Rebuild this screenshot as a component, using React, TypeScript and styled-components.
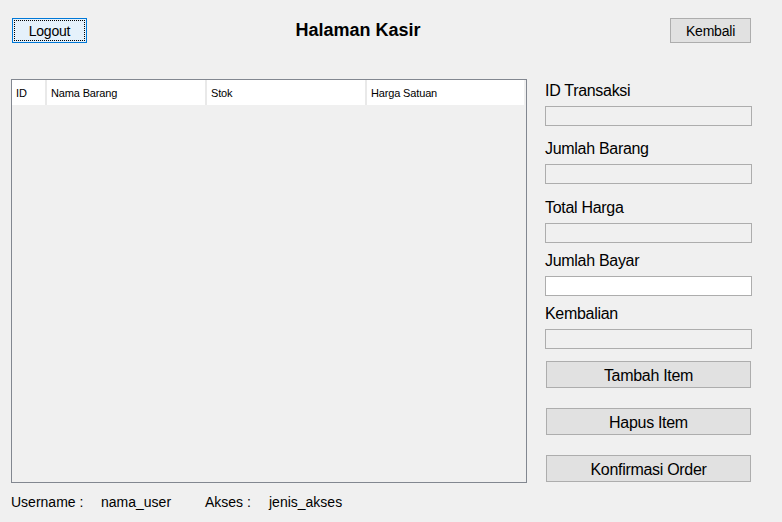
import React from "react";
import styled, { createGlobalStyle } from "styled-components";

const Global = createGlobalStyle`
  html, body { margin: 0; padding: 0; background: #f0f0f0; }
  body { font-family: "Liberation Sans", Arial, sans-serif; color: #000; }
  * { box-sizing: border-box; }
`;

const Frame = styled.div`
  width: 782px;
  height: 522px;
  background: #f0f0f0;
  padding-top: 18px;
`;

const TopBar = styled.div`
  display: flex;
  align-items: center;
  height: 25px;
  padding-left: 12px;
`;

const Title = styled.h1`
  margin: 0;
  width: 542px;
  text-align: center;
  font-size: 18px;
  font-weight: bold;
  line-height: 25px;
`;

const SmallButton = styled.button<{ $focused?: boolean; $w: number }>`
  width: ${(p) => p.$w}px;
  height: 25px;
  margin-left: ${(p) => (p.$focused ? 0 : 41)}px;
  padding: 0;
  font-family: "Liberation Sans", Arial, sans-serif;
  font-size: 14px;
  letter-spacing: -0.2px;
  color: #000;
  background: ${(p) => (p.$focused ? "#e5f1fb" : "#e1e1e1")};
  border: 1px solid ${(p) => (p.$focused ? "#0078d7" : "#adadad")};
  outline: ${(p) => (p.$focused ? "1px dotted #000" : "none")};
  outline-offset: -3px;
`;

const Main = styled.div`
  display: flex;
  align-items: flex-start;
  margin-top: 36px;
  padding-left: 11px;
  gap: 18px;
`;

const Table = styled.div`
  width: 516px;
  height: 404px;
  border: 1px solid #828790;
  background: #f0f0f0;
`;

const HeaderRow = styled.div`
  display: grid;
  grid-template-columns: 35px 160px 160px 157px;
  height: 24px;
`;

const HeaderCell = styled.div<{ $last?: boolean }>`
  background: #fff;
  border-right: ${(p) => (p.$last ? "none" : "2px solid #e9e9e9")};
  font-family: "Liberation Sans", Tahoma, sans-serif;
  font-size: 11px;
  letter-spacing: -0.15px;
  line-height: 24px;
  padding: 1px 0 0 4px;
  color: #000;
`;

const Panel = styled.div`
  width: 207px;
  display: flex;
  flex-direction: column;
  padding-top: 1px;
`;

const Label = styled.div<{ $top: number }>`
  margin-top: ${(p) => p.$top + 1}px;
  height: 20px;
  line-height: 20px;
  font-size: 16px;
  letter-spacing: -0.3px;
  margin-bottom: 5px;
`;

const Field = styled.div<{ $editable?: boolean }>`
  width: 207px;
  height: 20px;
  border: 1px solid #adadad;
  background: ${(p) => (p.$editable ? "#fff" : "#f0f0f0")};
`;

const ActionButton = styled.button<{ $top: number }>`
  width: 205px;
  height: 27px;
  margin-left: 1px;
  margin-top: ${(p) => p.$top}px;
  padding: 2px 0 0;
  font-family: "Liberation Sans", Arial, sans-serif;
  font-size: 16px;
  letter-spacing: -0.3px;
  color: #000;
  background: #e1e1e1;
  border: 1px solid #adadad;
`;

const Footer = styled.div`
  display: grid;
  grid-template-columns: 90px 104px 64px auto;
  padding-left: 11px;
  margin-top: 11px;
  font-size: 14px;
  line-height: 16px;
`;

const FooterText = styled.span``;

const fields: { label: string; top: number; editable?: boolean }[] = [
  { label: "ID Transaksi", top: 0 },
  { label: "Jumlah Barang", top: 12 },
  { label: "Total Harga", top: 13 },
  { label: "Jumlah Bayar", top: 7, editable: true },
  { label: "Kembalian", top: 7 },
];

const columns = ["ID", "Nama Barang", "Stok", "Harga Satuan"];

export default function App() {
  return (
    <>
      <Global />
      <Frame>
        <TopBar>
          <SmallButton $focused $w={75}>Logout</SmallButton>
          <Title>Halaman Kasir</Title>
          <SmallButton $w={81}>Kembali</SmallButton>
        </TopBar>
        <Main>
          <Table>
            <HeaderRow>
              {columns.map((c, i) => (
                <HeaderCell key={c} $last={i === columns.length - 1}>
                  {c}
                </HeaderCell>
              ))}
            </HeaderRow>
          </Table>
          <Panel>
            {fields.map((f) => (
              <React.Fragment key={f.label}>
                <Label $top={f.top}>{f.label}</Label>
                <Field $editable={f.editable} />
              </React.Fragment>
            ))}
            <ActionButton $top={12}>Tambah Item</ActionButton>
            <ActionButton $top={20}>Hapus Item</ActionButton>
            <ActionButton $top={20}>Konfirmasi Order</ActionButton>
          </Panel>
        </Main>
        <Footer>
          <FooterText>Username :</FooterText>
          <FooterText>nama_user</FooterText>
          <FooterText>Akses :</FooterText>
          <FooterText>jenis_akses</FooterText>
        </Footer>
      </Frame>
    </>
  );
}
